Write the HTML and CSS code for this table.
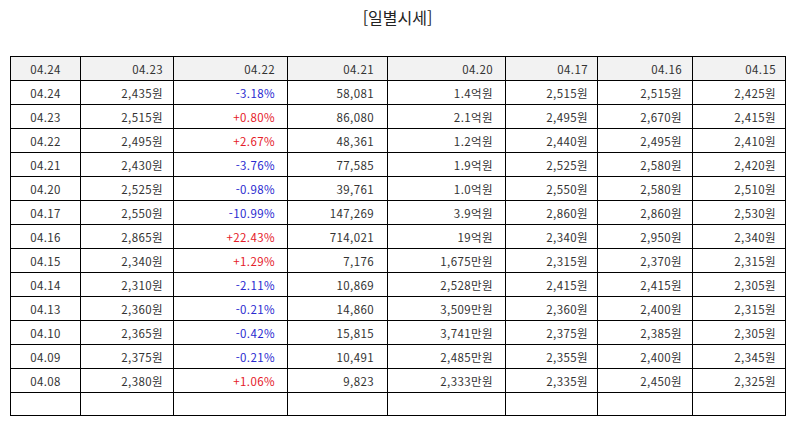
FILE: index.html
```html
<!DOCTYPE html>
<html lang="ko">
<head>
<meta charset="utf-8">
<title>일별시세</title>
<link rel="stylesheet" href="styles.css">
</head>
<body>
<div class="page">
  <h1 class="title">[일별시세]</h1>
  <table class="quotes">
    <colgroup>
      <col class="c1"><col class="c2"><col class="c3"><col class="c4"><col class="c5"><col class="c6"><col class="c7"><col class="c8">
    </colgroup>
    <thead>
      <tr><th class="date">04.24</th><th class="p2">04.23</th><th class="p3">04.22</th><th class="p4">04.21</th><th class="p5">04.20</th><th class="p6">04.17</th><th class="p7">04.16</th><th class="p8">04.15</th></tr>
    </thead>
    <tbody>
      <tr><td class="date">04.24</td><td class="p2">2,435원</td><td class="p3 down">-3.18%</td><td class="p4">58,081</td><td class="p5">1.4억원</td><td class="p6">2,515원</td><td class="p7">2,515원</td><td class="p8">2,425원</td></tr>
      <tr><td class="date">04.23</td><td class="p2">2,515원</td><td class="p3 up">+0.80%</td><td class="p4">86,080</td><td class="p5">2.1억원</td><td class="p6">2,495원</td><td class="p7">2,670원</td><td class="p8">2,415원</td></tr>
      <tr><td class="date">04.22</td><td class="p2">2,495원</td><td class="p3 up">+2.67%</td><td class="p4">48,361</td><td class="p5">1.2억원</td><td class="p6">2,440원</td><td class="p7">2,495원</td><td class="p8">2,410원</td></tr>
      <tr><td class="date">04.21</td><td class="p2">2,430원</td><td class="p3 down">-3.76%</td><td class="p4">77,585</td><td class="p5">1.9억원</td><td class="p6">2,525원</td><td class="p7">2,580원</td><td class="p8">2,420원</td></tr>
      <tr><td class="date">04.20</td><td class="p2">2,525원</td><td class="p3 down">-0.98%</td><td class="p4">39,761</td><td class="p5">1.0억원</td><td class="p6">2,550원</td><td class="p7">2,580원</td><td class="p8">2,510원</td></tr>
      <tr><td class="date">04.17</td><td class="p2">2,550원</td><td class="p3 down">-10.99%</td><td class="p4">147,269</td><td class="p5">3.9억원</td><td class="p6">2,860원</td><td class="p7">2,860원</td><td class="p8">2,530원</td></tr>
      <tr><td class="date">04.16</td><td class="p2">2,865원</td><td class="p3 up">+22.43%</td><td class="p4">714,021</td><td class="p5">19억원</td><td class="p6">2,340원</td><td class="p7">2,950원</td><td class="p8">2,340원</td></tr>
      <tr><td class="date">04.15</td><td class="p2">2,340원</td><td class="p3 up">+1.29%</td><td class="p4">7,176</td><td class="p5">1,675만원</td><td class="p6">2,315원</td><td class="p7">2,370원</td><td class="p8">2,315원</td></tr>
      <tr><td class="date">04.14</td><td class="p2">2,310원</td><td class="p3 down">-2.11%</td><td class="p4">10,869</td><td class="p5">2,528만원</td><td class="p6">2,415원</td><td class="p7">2,415원</td><td class="p8">2,305원</td></tr>
      <tr><td class="date">04.13</td><td class="p2">2,360원</td><td class="p3 down">-0.21%</td><td class="p4">14,860</td><td class="p5">3,509만원</td><td class="p6">2,360원</td><td class="p7">2,400원</td><td class="p8">2,315원</td></tr>
      <tr><td class="date">04.10</td><td class="p2">2,365원</td><td class="p3 down">-0.42%</td><td class="p4">15,815</td><td class="p5">3,741만원</td><td class="p6">2,375원</td><td class="p7">2,385원</td><td class="p8">2,305원</td></tr>
      <tr><td class="date">04.09</td><td class="p2">2,375원</td><td class="p3 down">-0.21%</td><td class="p4">10,491</td><td class="p5">2,485만원</td><td class="p6">2,355원</td><td class="p7">2,400원</td><td class="p8">2,345원</td></tr>
      <tr><td class="date">04.08</td><td class="p2">2,380원</td><td class="p3 up">+1.06%</td><td class="p4">9,823</td><td class="p5">2,333만원</td><td class="p6">2,335원</td><td class="p7">2,450원</td><td class="p8">2,325원</td></tr>
      <tr class="empty"><td></td><td></td><td></td><td></td><td></td><td></td><td></td><td></td></tr>
    </tbody>
  </table>
</div>
</body>
</html>
```

FILE: styles.css
```css
html, body {
  margin: 0;
  padding: 0;
  background: #fff;
}

body {
  font-family: "Noto Sans CJK KR", "Noto Sans", sans-serif;
  color: #333;
}

.page {
  padding: 0 10px;
}

.title {
  margin: 0;
  height: 56px;
  padding-top: 6px;
  box-sizing: border-box;
  text-align: center;
  font-size: 16px;
  font-weight: normal;
  line-height: 22px;
  color: #222;
}

.quotes {
  width: 775px;
  border-collapse: collapse;
  table-layout: fixed;
  font-size: 11.5px;
  letter-spacing: 0.4px;
}

.c1 { width: 70px; }
.c2 { width: 93px; }
.c3 { width: 114px; }
.c4 { width: 100px; }
.c5 { width: 118px; }
.c6 { width: 92px; }
.c7 { width: 95px; }
.c8 { width: 93px; }

.quotes th,
.quotes td {
  border: 1px solid #000;
  height: 23px;
  padding: 0;
  font-weight: normal;
  text-align: right;
  line-height: 14px;
  white-space: nowrap;
}

.quotes th {
  background: #f2f2f2;
}

.quotes .empty td {
  height: 22px;
}

.quotes .date {
  text-align: center;
}

.p2 { padding-right: 10px !important; }
.p3 { padding-right: 12px !important; }
.p4 { padding-right: 13px !important; }
.p5 { padding-right: 12px !important; }
.p6 { padding-right: 9px !important; }
.p7 { padding-right: 10px !important; }
.p8 { padding-right: 9px !important; }

.up { color: #e5202a; }
.down { color: #2a2ad0; }
```
